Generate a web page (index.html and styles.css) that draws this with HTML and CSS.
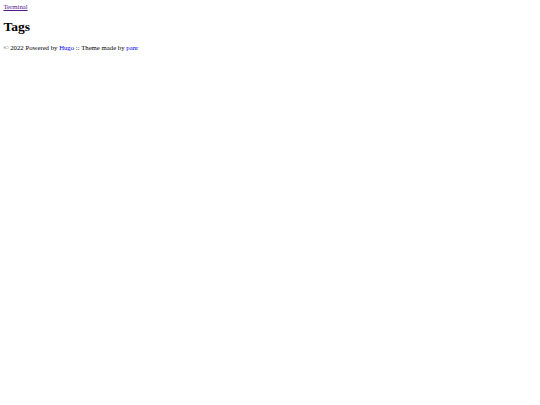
FILE: index.html
```html
<!DOCTYPE html>
<html lang="en">
<head>
<meta charset="utf-8">
<title>Tags</title>
<link rel="stylesheet" href="styles.css">
</head>
<body class="page">
<header class="site-header">
  <a class="logo visited" href="#">Terminal</a>
</header>
<main class="content">
  <h1 class="title">Tags</h1>
</main>
<footer class="site-footer">
  © 2022 Powered by <a class="link" href="#">Hugo</a> :: Theme made by <a class="link" href="#">panr</a>
</footer>
</body>
</html>
```
FILE: styles.css
```css
html { background: #ffffff; }
.page {
  margin: 3.375px;
  font-family: "Liberation Serif", "Times New Roman", serif;
  font-size: 6.75px;
  color: #000000;
}
.site-header { display: block; }
.logo.visited { color: #551a8b; }
.link { color: #0000ee; }
.content { display: block; }
.title {
  font-size: 13.5px;
  font-weight: bold;
  margin: 9.045px 0;
}
.site-footer { display: block; }
```
